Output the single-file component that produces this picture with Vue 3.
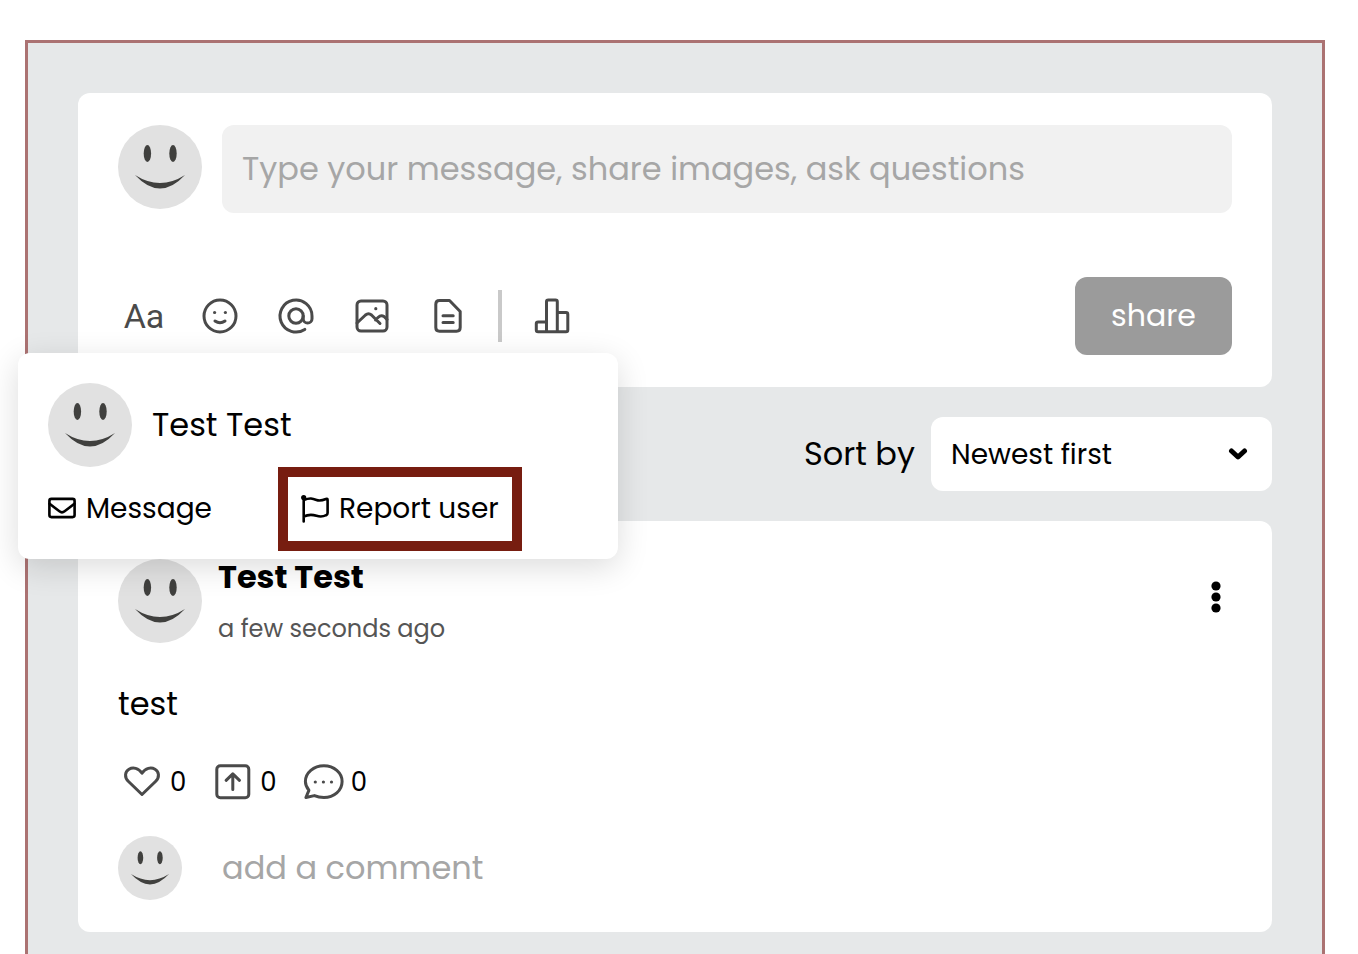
<script setup>
import { ref, h } from 'vue'

const message = ref('')
const comment = ref('')
const sort = ref('newest')

const SmileyFace = () =>
  h('svg', { viewBox: '0 0 84 84', width: '100%', height: '100%', 'aria-hidden': 'true' }, [
    h('circle', { cx: 42, cy: 42, r: 42, fill: '#e1e1e1' }),
    h('ellipse', { cx: 29.4, cy: 28.6, rx: 3.7, ry: 8.5, fill: '#40403e' }),
    h('ellipse', { cx: 55, cy: 28.6, rx: 3.7, ry: 8.5, fill: '#40403e' }),
    h('path', { d: 'M17 50Q42 77 67 50Q42 66 17 50Z', fill: '#40403e' }),
  ])
</script>

<template>
  <main class="page">
    <div class="panel">
      <form class="card composer" @submit.prevent>
        <div class="compose-row">
          <span class="avatar"><SmileyFace /></span>
          <input
            v-model="message"
            class="message-input"
            type="text"
            aria-label="Message"
            placeholder="Type your message, share images, ask questions"
          />
        </div>
        <div class="toolbar">
          <button type="button" class="tool letters" aria-label="Text formatting">Aa</button>
          <button type="button" class="tool" aria-label="Emoji">
            <svg viewBox="0 0 52 52">
              <circle cx="26" cy="26" r="16" />
              <circle class="dot" cx="20.6" cy="22.5" r="1.6" />
              <circle class="dot" cx="31.4" cy="22.5" r="1.6" />
              <path d="M21 31Q26 34.6 31 31" />
            </svg>
          </button>
          <button type="button" class="tool" aria-label="Mention">
            <svg viewBox="0 0 52 52">
              <circle cx="26" cy="26" r="7.2" />
              <path d="M33.2 26v2.7a4.4 4.4 0 0 0 8.8 0V26a16 16 0 1 0-7.2 13.4" />
            </svg>
          </button>
          <button type="button" class="tool" aria-label="Image">
            <svg viewBox="0 0 52 52">
              <rect x="11" y="11" width="30" height="30" rx="4" />
              <path d="M11 33L19.5 25Q22.5 22.5 25.5 25L34 33.5M29.5 30L32 27.5Q35 24.5 38 26.5L41 29.5" />
              <circle class="dot" cx="29.8" cy="18.7" r="1.6" />
            </svg>
          </button>
          <button type="button" class="tool" aria-label="Document">
            <svg viewBox="0 0 52 52">
              <path d="M17.5 10.5H27.5L38.2 21.5V37.5Q38.2 41.2 34.5 41.2H17.5Q13.8 41.2 13.8 37.5V14.2Q13.8 10.5 17.5 10.5ZM21 25.8H31.2M21 32.6H31.2" />
            </svg>
          </button>
          <span class="divider"></span>
          <button type="button" class="tool" aria-label="Poll">
            <svg viewBox="0 0 52 52">
              <path d="M20.5 41.8V11.8Q20.5 10 22.3 10H29.5Q31.3 10 31.3 11.8V41.8M20.5 32H12.1Q10.3 32 10.3 33.8V40Q10.3 41.8 12.1 41.8H40Q41.8 41.8 41.8 40V24.4Q41.8 22.6 40 22.6H31.3" />
            </svg>
          </button>
          <button type="submit" class="share">share</button>
        </div>
      </form>

      <div class="sort-row">
        <label for="sort">Sort by</label>
        <div class="select-box">
          <select id="sort" v-model="sort">
            <option value="newest">Newest first</option>
            <option value="oldest">Oldest first</option>
          </select>
          <svg class="chevron" viewBox="0 0 20 12" aria-hidden="true">
            <path d="M3.5 3L10 9L16.5 3" />
          </svg>
        </div>
      </div>

      <article class="card post">
        <header class="post-head">
          <div class="author-anchor">
            <span class="avatar"><SmileyFace /></span>
            <aside class="user-popover">
              <div class="user-row">
                <span class="avatar"><SmileyFace /></span>
                <span class="user-name">Test Test</span>
              </div>
              <div class="user-actions">
                <div class="action-cell">
                  <button type="button" class="user-action">
                    <svg viewBox="0 0 28 28" aria-hidden="true">
                      <rect x="1.4" y="3.9" width="25.2" height="18.2" rx="2" />
                      <path d="M1.6 8.8L11.4 16.3Q14 18.4 16.6 16.3L26.4 8.8" />
                    </svg>
                    Message
                  </button>
                </div>
                <button type="button" class="user-action highlighted">
                  <svg viewBox="0 0 28 28" aria-hidden="true">
                    <circle class="knob" cx="2.7" cy="2.6" r="2.6" />
                    <path d="M2.7 3V26.5M2.7 5C9 2.5 11.5 3.4 15.5 5C19 6.4 22 5.2 25 4Q26.6 3.4 26.6 5V18Q26.6 19.6 25.2 20.2C22 21.8 19 22 15.5 20.8C11 19.3 8 19 2.7 21.5" />
                  </svg>
                  Report user
                </button>
              </div>
            </aside>
          </div>
          <div class="author">
            <strong>Test Test</strong>
            <time>a few seconds ago</time>
          </div>
          <button type="button" class="kebab" aria-label="Post options">
            <svg viewBox="0 0 32 32">
              <circle cx="16" cy="5" r="4.6" />
              <circle cx="16" cy="16" r="4.6" />
              <circle cx="16" cy="27" r="4.6" />
            </svg>
          </button>
        </header>

        <p class="post-text">test</p>

        <div class="reactions">
          <button type="button" class="reaction" aria-label="Like">
            <svg viewBox="0 0 48 48">
              <path d="M24 36.5L10.5 23.5C6 19 7 13.5 11 11.2C15 9 20.5 10 24 15.2C27.5 10 33 9 37 11.2C41 13.5 42 19 37.5 23.5Z" />
            </svg>
            <span>0</span>
          </button>
          <button type="button" class="reaction" aria-label="Repost">
            <svg viewBox="0 0 48 48">
              <rect x="8.8" y="7.8" width="32" height="32" rx="3.5" />
              <path d="M24.8 31.5V16M18.1 22.3L24.8 15.8L31.5 22.3" />
            </svg>
            <span>0</span>
          </button>
          <button type="button" class="reaction" aria-label="Comments">
            <svg viewBox="0 0 48 48">
              <path d="M6.9 39.5L9.9 32.3C7.6 29.5 6.4 26.5 6.4 23.5C6.4 15 14.6 7.8 24.9 7.8C35.1 7.8 43.1 15 43.1 23.5C43.1 32.5 35.1 39.5 24.9 39.5C21.4 39.5 18.1 38.8 15.4 37.6Z" />
              <circle class="dot" cx="16.3" cy="24" r="1.6" />
              <circle class="dot" cx="24.4" cy="24" r="1.6" />
              <circle class="dot" cx="32.5" cy="24" r="1.6" />
            </svg>
            <span>0</span>
          </button>
        </div>

        <div class="comment-row">
          <span class="avatar small"><SmileyFace /></span>
          <input
            v-model="comment"
            class="comment-input"
            type="text"
            aria-label="Comment"
            placeholder="add a comment"
          />
        </div>
      </article>
    </div>
  </main>
</template>

<style>
body {
  margin: 0;
  background: #fff;
}
</style>

<style scoped>
* {
  box-sizing: border-box;
}
.page {
  min-height: 100vh;
  padding: 40px 33px 0 25px;
  display: flex;
  flex-direction: column;
  font-family: Poppins, Inter, "Open Sans", sans-serif;
  font-size: 32px;
  color: #000;
}
.panel {
  flex: 1;
  display: flex;
  flex-direction: column;
  gap: 30px;
  padding: 50px 50px 22px;
  border: 3px solid #ab7272;
  border-bottom: 0;
  background: #e6e8e9;
}
button,
input,
select {
  font-family: inherit;
  font-size: inherit;
  color: inherit;
  margin: 0;
  padding: 0;
  border: 0;
  background: none;
}
svg {
  display: block;
}
.card {
  background: #fff;
  border-radius: 12px;
}
.composer {
  padding: 32px 40px;
}
.compose-row {
  display: flex;
  gap: 20px;
}
.avatar {
  display: block;
  flex: none;
  width: 84px;
  height: 84px;
}
.avatar.small {
  width: 64px;
  height: 64px;
}
.message-input {
  flex: 1;
  min-width: 0;
  height: 88px;
  padding: 0 20px;
  border-radius: 12px;
  background: #f1f1f1;
}
input::placeholder {
  color: #a6a6a6;
  opacity: 1;
}
.toolbar {
  display: flex;
  align-items: center;
  gap: 24px;
  margin-top: 64px;
}
.tool {
  width: 52px;
  height: 52px;
  color: #4a4a4a;
}
.tool svg,
.reaction svg {
  fill: none;
  stroke: #4a4a4a;
  stroke-width: 3;
  stroke-linecap: round;
  stroke-linejoin: round;
}
.tool .dot,
.reaction .dot {
  fill: #4a4a4a;
  stroke: none;
}
.letters {
  font-family: Roboto, sans-serif;
  font-size: 34px;
}
.divider {
  width: 4px;
  height: 52px;
  background: #c9c9c9;
}
.share {
  width: 157px;
  height: 78px;
  margin-left: auto;
  border-radius: 12px;
  background: #9b9b9b;
  color: #fff;
  font-size: 30px;
}
.sort-row {
  display: flex;
  justify-content: flex-end;
  align-items: center;
  gap: 16px;
}
.select-box {
  position: relative;
  width: 341px;
}
.select-box select {
  display: block;
  width: 100%;
  height: 74px;
  padding: 0 60px 0 20px;
  border-radius: 12px;
  background: #fff;
  font-size: 28px;
  appearance: none;
}
.chevron {
  position: absolute;
  top: 31px;
  right: 24px;
  width: 20px;
  height: 12px;
  fill: none;
  stroke: #000;
  stroke-width: 5;
  stroke-linecap: round;
  stroke-linejoin: round;
  pointer-events: none;
}
.post {
  padding: 38px 40px 32px;
}
.post-head {
  display: flex;
  align-items: flex-start;
  gap: 16px;
}
.author-anchor {
  position: relative;
}
.author {
  display: flex;
  flex-direction: column;
  gap: 18px;
}
.author strong {
  line-height: 36px;
  font-weight: 700;
}
.author time {
  font-size: 24px;
  line-height: 32px;
  color: #555;
}
.kebab {
  width: 32px;
  height: 76px;
  margin-left: auto;
}
.post-text {
  margin: 35px 0 28px;
  line-height: 48px;
}
.reactions {
  display: flex;
  gap: 22px;
}
.reaction {
  display: flex;
  align-items: center;
  gap: 4px;
  height: 52px;
  font-size: 26px;
}
.reaction svg {
  width: 48px;
  height: 48px;
}
.comment-row {
  display: flex;
  align-items: center;
  gap: 40px;
  margin-top: 28px;
}
.comment-input {
  flex: 1;
  min-width: 0;
  height: 64px;
}
.user-popover {
  position: absolute;
  bottom: 100%;
  left: -100px;
  z-index: 2;
  width: 600px;
  padding: 30px 30px 8px;
  border-radius: 12px;
  background: #fff;
  box-shadow: 0 8px 32px rgba(0, 0, 0, 0.14);
}
.user-row {
  display: flex;
  align-items: center;
  gap: 20px;
}
.user-actions {
  display: flex;
  align-items: center;
}
.action-cell {
  width: 230px;
}
.user-action {
  display: flex;
  align-items: center;
  gap: 10px;
  font-size: 28px;
  white-space: nowrap;
}
.user-action svg {
  width: 28px;
  height: 28px;
  fill: none;
  stroke: #000;
  stroke-width: 2.6;
  stroke-linecap: round;
  stroke-linejoin: round;
}
.user-action .knob {
  fill: #000;
  stroke: none;
}
.highlighted {
  height: 84px;
  padding: 0 13px;
  border: 10px solid #771d10;
}
</style>
